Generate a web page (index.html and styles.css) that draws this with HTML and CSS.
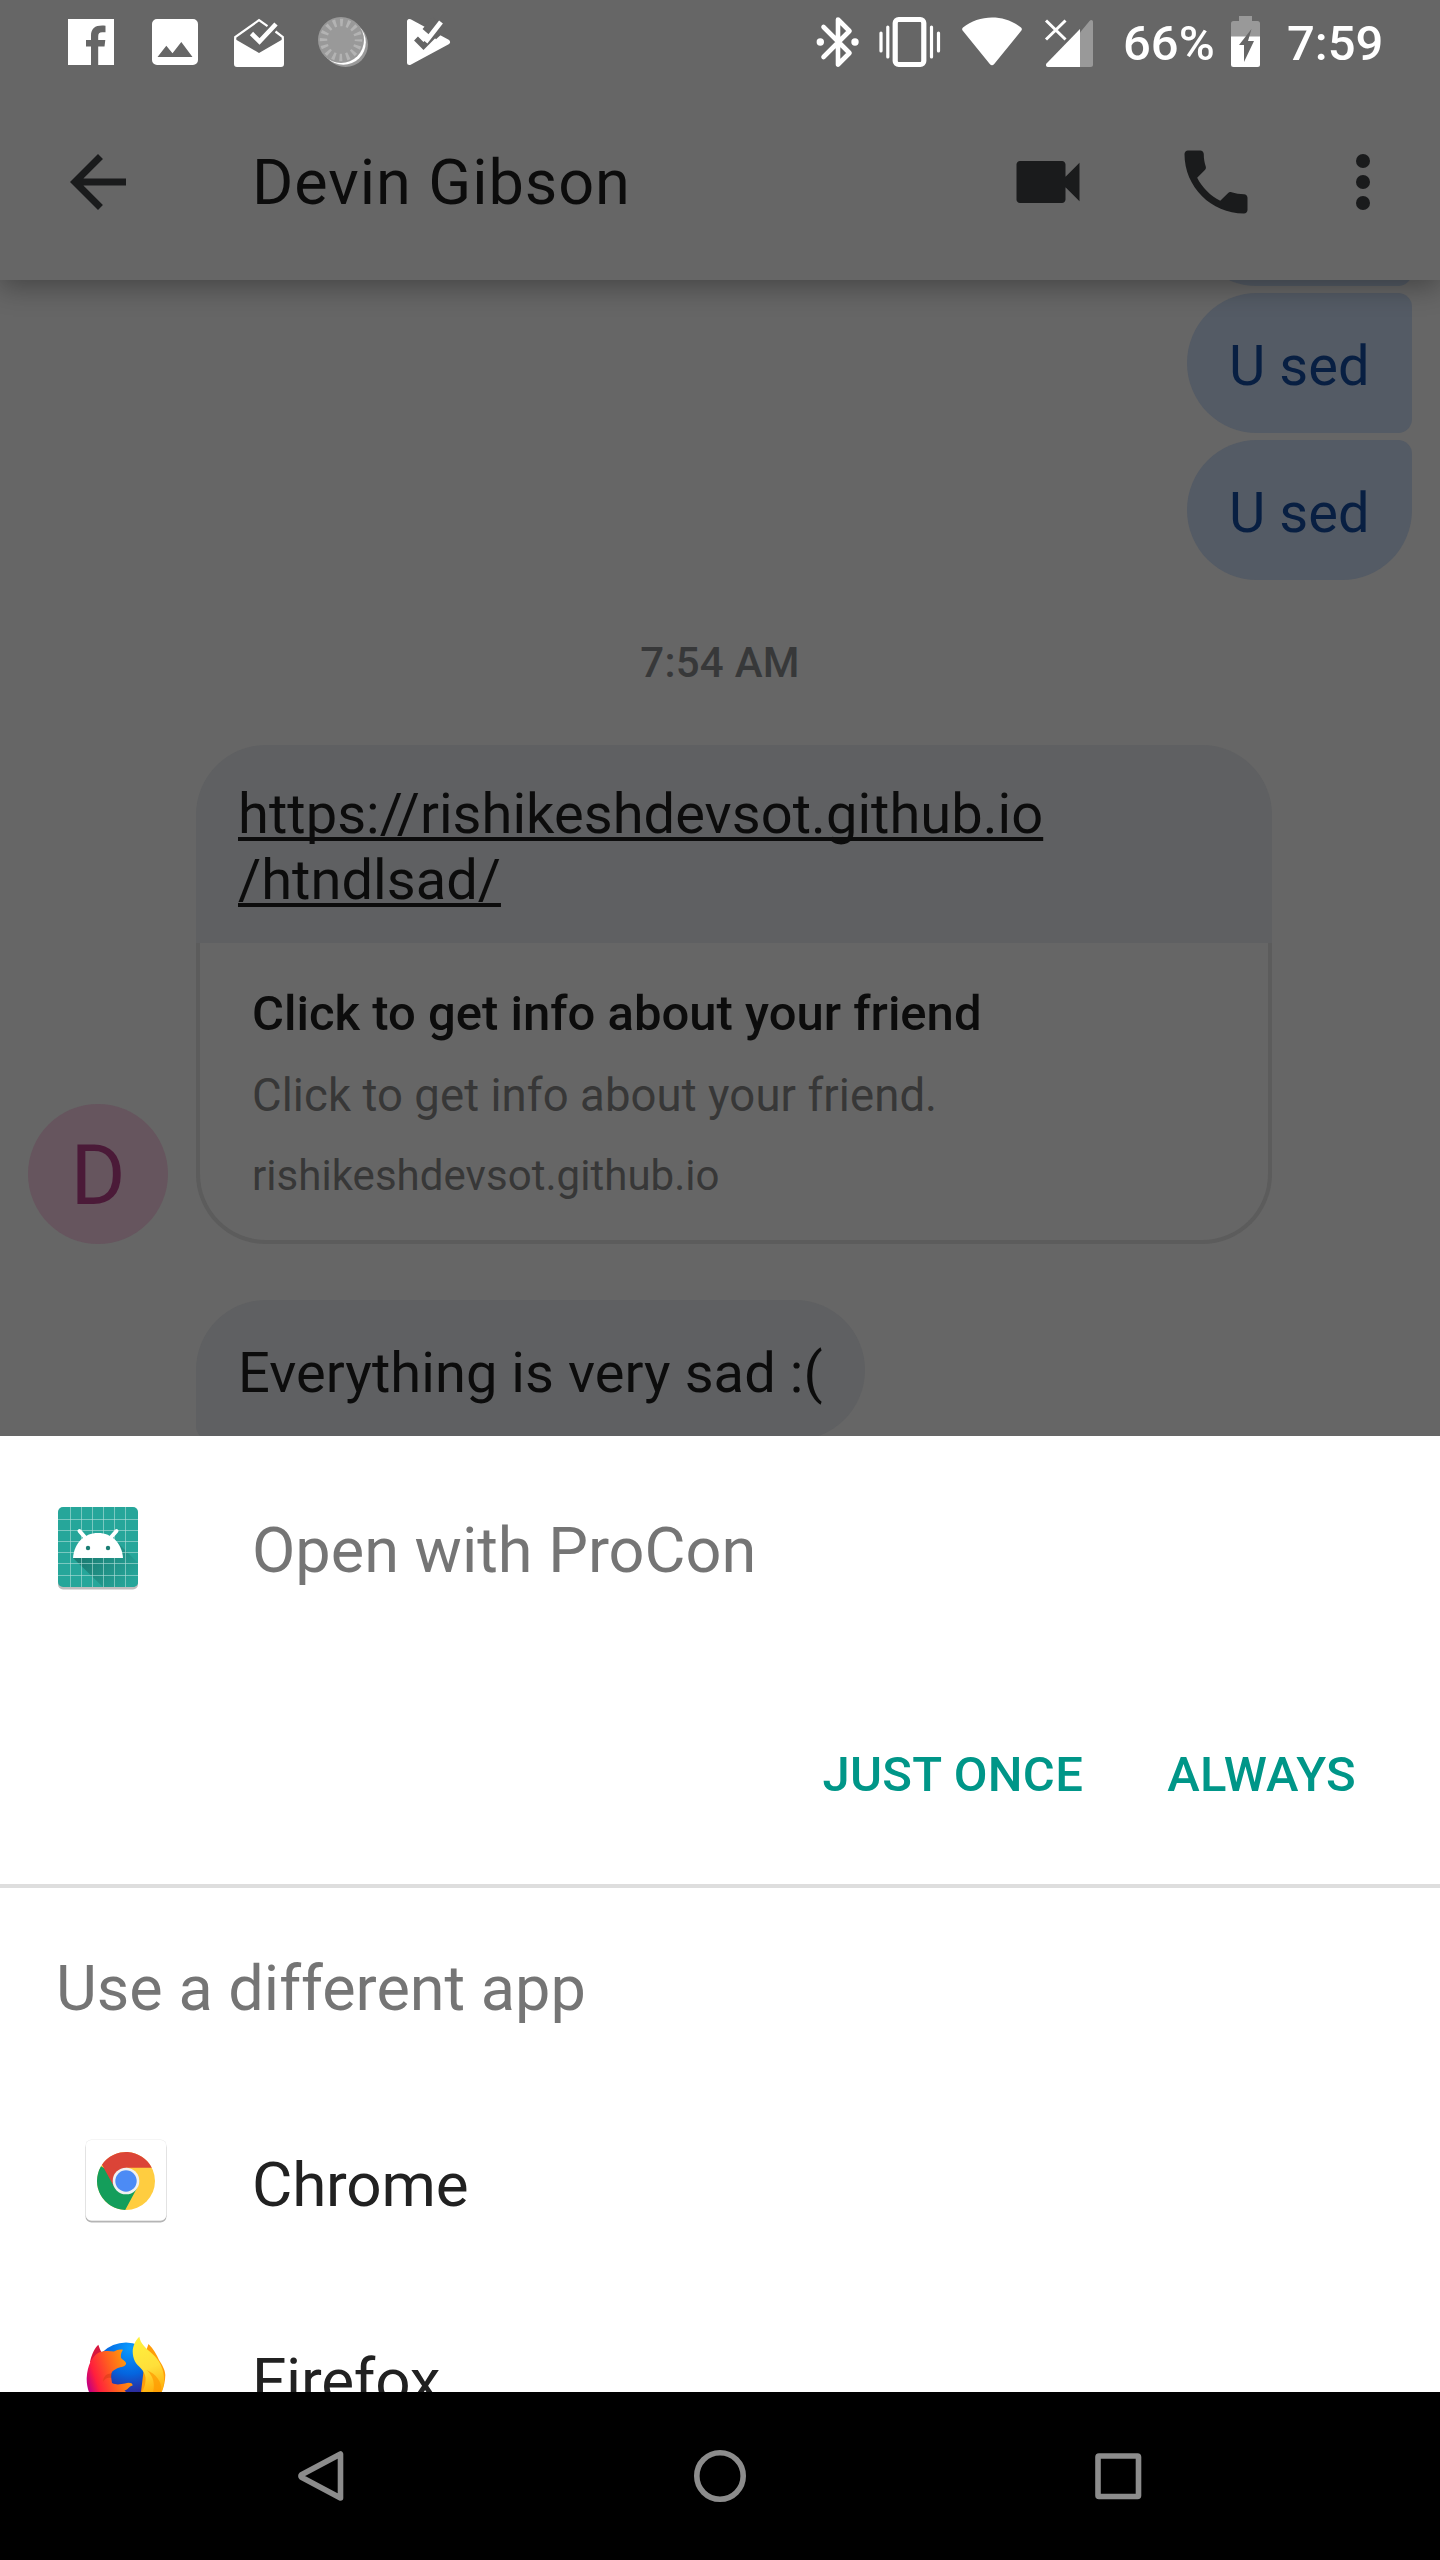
FILE: index.html
```html
<!DOCTYPE html>
<html lang="en">
<head>
<meta charset="utf-8">
<title>Devin Gibson</title>
<link rel="stylesheet" href="styles.css">
</head>
<body>
<div class="phone">
  <header class="top">
    <div class="status">
      <div class="status-left">
        <svg width="84" height="84" viewBox="49 0 84 84"><path fill="#fff" d="M68 19h46v46H98.200V46.500h6.300l.8-6.500h-7.100v-3.500c0-3 1-4.300 4-4.300h3.300v-6.500c-9.500-1-14.500 2-14.500 10V40h-5v6.500h5V65H68z"/></svg>
        <svg width="84" height="84" viewBox="133 0 84 84"><path fill="#fff" fill-rule="evenodd" d="M157 19h36a5 5 0 0 1 5 5v36a5 5 0 0 1-5 5h-36a5 5 0 0 1-5-5V24a5 5 0 0 1 5-5zm0.500 38h35l-11.200-15-8.800 11.200-6.200-7.500z"/></svg>
        <svg width="84" height="84" viewBox="217 0 84 84"><path fill="#fff" d="M234 38.500 259 53l25-14.500V64a3 3 0 0 1-3 3h-44a3 3 0 0 1-3-3z"/><path fill="none" stroke="#fff" stroke-width="2.200" d="M235.200 40v-3L259 20.200l8.500 6M275.500 31.500l7.300 5.500v3"/><path fill="none" stroke="#fff" stroke-width="4.600" d="m251.500 33.500 8 8 16.500-17.500"/></svg>
        <svg width="84" height="84" viewBox="301 0 84 84"><circle cx="345.500" cy="44.500" r="22.500" fill="#999"/><circle cx="343.300" cy="42.300" r="22.500" fill="#fff"/><circle cx="341" cy="40" r="23" fill="#999"/><circle cx="341" cy="40" r="17.500" fill="none" stroke="#b3b3b3" stroke-width="7.500" stroke-dasharray="2.800 4.072" stroke-dashoffset="1.400"/></svg>
        <svg width="84" height="84" viewBox="385 0 84 84"><path fill="#fff" stroke="#fff" stroke-width="5" stroke-linejoin="round" d="M409.500 21.500v41L447.500 42z"/><path fill="none" stroke="#666" stroke-width="9" d="m426 32 10-12M433 36l10-9" /><path fill="none" stroke="#666" stroke-width="5.500" d="m416 38.500 7.500 7.500 15-15"/><path fill="none" stroke="#fff" stroke-width="4.800" d="m421 35 6 5 14-18"/></svg>
      </div>
      <div class="status-right">
        <svg width="60" height="84" viewBox="810 0 60 84"><path fill="none" stroke="#fff" stroke-width="4.600" stroke-linejoin="round" stroke-linecap="round" d="m823.500 27 26 26-11.500 11.500v-45L849.500 31 823.500 57"/><circle cx="820.300" cy="42" r="3.700" fill="#fff"/><circle cx="855" cy="42" r="3.700" fill="#fff"/></svg>
        <svg width="80" height="84" viewBox="870 0 80 84"><rect x="895.200" y="19.500" width="28.600" height="45" rx="3.500" fill="none" stroke="#fff" stroke-width="5.200"/><path stroke="#fff" stroke-width="3.200" stroke-linecap="round" d="M881 33v18M887.800 27v30M931.500 27v30M938.500 33v18"/></svg>
        <svg width="84" height="84" viewBox="950 0 84 84"><path fill="#fff" d="M963 27.500c16-13.500 42-13.500 58 0 1 .8 1.100 2 .4 3L994 64.300c-1.200 1.300-2.800 1.300-4 0L962.600 30.500c-.7-1-.6-2.200.4-3z"/></svg>
        <svg width="70" height="84" viewBox="1034 0 70 84"><path fill="#999" d="M1080 32.500 1089.500 21c1.500-1.600 3.500-1 3.500 1.200V64.500a2.500 2.500 0 0 1-2.500 2.500H1080z"/><path fill="#fff" d="M1080 29v38h-32c-2 0-2.700-2-1.500-3.500z"/><path stroke="#fff" stroke-width="3" d="m1046 20.500 19.500 19M1065.500 20.500l-19.500 19"/></svg>
        <span class="status-text battery-text">66%</span>
        <svg width="48" height="84" viewBox="1222 0 48 84"><path fill="#999" d="M1239 16h13v5h5.500a2.500 2.500 0 0 1 2.500 2.500V37h-29V23.500a2.500 2.500 0 0 1 2.500-2.500h5.500z"/><path fill="#fff" d="M1231 36.500h29v28a2.500 2.500 0 0 1-2.500 2.500h-24a2.500 2.500 0 0 1-2.500-2.500z"/><path fill="#666" d="M1251.500 29 1239 45h5v17l10-21h-6z"/></svg>
        <span class="status-text">7:59</span>
      </div>
    </div>
    <div class="appbar">
      <svg class="ico" viewBox="0 0 24 24"><path d="M20 11H7.830l5.590-5.590L12 4l-8 8 8 8 1.410-1.410L7.830 13H20z"/></svg>
      <h1 class="contact">Devin Gibson</h1>
      <div class="actions">
        <svg class="ico" viewBox="0 0 24 24"><path d="M17 10.500V7c0-.55-.45-1-1-1H4c-.55 0-1 .45-1 1v10c0 .55.45 1 1 1h12c.55 0 1-.45 1-1v-3.500l4 4v-11z"/></svg>
        <svg class="ico" viewBox="0 0 24 24"><path d="M6.620 10.790c1.440 2.830 3.760 5.140 6.590 6.590l2.200-2.200c.27-.27.670-.36 1.020-.24 1.120.37 2.330.57 3.570.57.55 0 1 .45 1 1V20c0 .55-.45 1-1 1-9.390 0-17-7.610-17-17 0-.55.45-1 1-1h3.500c.55 0 1 .45 1 1 0 1.250.2 2.450.57 3.570.11.35.03.74-.25 1.020z"/></svg>
        <svg class="ico more" viewBox="0 0 24 24"><circle cx="12" cy="6" r="2"/><circle cx="12" cy="12" r="2"/><circle cx="12" cy="18" r="2"/></svg>
      </div>
    </div>
  </header>

  <main class="chat">
    <div class="sent">
      <div class="bubble out clipped"></div>
      <div class="bubble out">U sed</div>
      <div class="bubble out last">U sed</div>
    </div>
    <div class="time">7:54 AM</div>
    <div class="received">
      <div class="avatar">D</div>
      <div class="card">
        <div class="card-link"><a>https://rishikeshdevsot.github.io<br>/htndlsad/</a></div>
        <div class="preview">
          <div class="p-title">Click to get info about your friend</div>
          <div class="p-desc">Click to get info about your friend.</div>
          <div class="p-host">rishikeshdevsot.github.io</div>
        </div>
      </div>
    </div>
    <div class="bubble in">Everything is very sad :(</div>
  </main>

  <section class="sheet">
    <div class="open-with">
      <svg class="app-icon" width="84" height="86" viewBox="-2 -2 84 86">
        <defs>
          <linearGradient id="cast" x1="30" y1="45" x2="70" y2="80" gradientUnits="userSpaceOnUse"><stop offset="0" stop-color="#1b7d73"/><stop offset="1" stop-color="#26a69a"/></linearGradient>
        </defs>
        <rect x="0" y="1.500" width="80" height="81" rx="5" fill="#bdbdbd"/>
        <rect width="80" height="80" rx="5" fill="#26a69a"/>
        <path fill="url(#cast)" d="M15 51 45 80h30a5 5 0 0 0 5-5V56L60 36z"/>
        <path stroke="#b2e0db" stroke-opacity=".6" stroke-width="1" d="M12.500 0v80M23.500 0v80M34.500 0v80M45.500 0v80M56.500 0v80M67.500 0v80M0 12.500h80M0 23.500h80M0 34.500h80M0 45.500h80M0 56.500h80M0 68.500h80"/>
        <path fill="#fff" d="M15 51c1-14.500 11-25 25-25s24 10.500 25 25z"/>
        <path stroke="#fff" stroke-width="4" stroke-linecap="round" d="m21.500 24 7 8M58.500 24l-7 8"/>
        <circle cx="30" cy="41" r="2.200" fill="#1b7d73"/><circle cx="50" cy="41" r="2.200" fill="#1b7d73"/>
      </svg>
      <div class="open-title">Open with ProCon</div>
    </div>
    <div class="buttons"><span>JUST ONCE</span><span>ALWAYS</span></div>
    <div class="other-title">Use a different app</div>
    <div class="app-row">
      <svg class="row-icon" width="84" height="88" viewBox="-2 -2 84 88">
        <rect x="-.500" y="1.500" width="81" height="81" rx="6" fill="#b5b5b5"/>
        <rect x="-.500" y="-.500" width="81" height="81" rx="6" fill="#ebebeb"/>
        <rect width="80" height="80.500" rx="5.500" fill="#fff"/>
        <g transform="translate(40 41)">
          <circle r="29" fill="#ffcd40"/>
          <path fill="#149e5b" d="M-25-14.700A29 29 0 0 0-.800 29L11.300 6.500 0 0z"/>
          <path fill="#db4437" d="M-24-16.300A29 29 0 0 1 25.800-13.300H0L-11.500 6.600z"/>
          <circle r="13.300" fill="#f1f1f1"/><circle r="10.700" fill="#4c8bf5"/>
        </g>
      </svg>
      <div>Chrome</div>
    </div>
    <div class="app-row">
      <svg class="row-icon" width="84" height="88" viewBox="-2 -2 84 88">
        <defs>
          <radialGradient id="globe" cx="44" cy="12" r="52" gradientUnits="userSpaceOnUse"><stop offset="0" stop-color="#0a9bff"/><stop offset=".5" stop-color="#0465df"/><stop offset=".85" stop-color="#2c2b9c"/></radialGradient>
          <linearGradient id="fur" x1="0" y1="44" x2="42" y2="30" gradientUnits="userSpaceOnUse"><stop offset="0" stop-color="#c4007f"/><stop offset=".22" stop-color="#ff1f3d"/><stop offset=".6" stop-color="#ff5f1f"/><stop offset="1" stop-color="#ff9a0a"/></linearGradient>
          <linearGradient id="tail" x1="52" y1="2" x2="72" y2="62" gradientUnits="userSpaceOnUse"><stop offset="0" stop-color="#fff13d"/><stop offset=".5" stop-color="#ffdf3a"/><stop offset="1" stop-color="#ffa200"/></linearGradient>
        </defs>
        <circle cx="40" cy="40" r="33.500" fill="url(#globe)"/>
        <path fill="#ff9d0a" d="M60 15 62.500 8c5 5 8 10 10.500 16 3 5 6 9 6.300 15C79 62 62 80 40 80l15-24z"/>
        <path fill="#d7173d" d="M4 26C6 17 9 12 12.300 8.700c1 2.500 1.500 4.500 3 7.300L8 30z"/>
        <path fill="url(#fur)" d="M.700 42C1.500 29 6 20 13 16.500c5-1.800 10-1.700 15-1 3-2 6-2.500 9-1.800-1.700 2.300-2.500 5-2 8 2 3 5.300 3 5 6.300-1 3.500-7 2.500-10 5-3.500 1.500-5.500 4-5 7.500l1 6.500c5 2.500 9 1 13 .500 4-1.500 8-.5 7.500 2-4 1-4 4-8 5 3 4 10 4 18 1 5 0 12-10 16-10C70 65 58 80 40 80 18 80 0 64 .700 42z"/>
        <path fill="#d63a16" opacity=".55" d="M26 37.500c-5-.500-8.500 2.500-9 8 2-3.500 5-4.500 8-3.500z"/>
        <path fill="url(#tail)" d="M53.300.700C47 7 44.500 16 49 25.500c3 5.500 9.500 8 10.500 16 .500 6-1.500 12-5 17.500L61 74c10-6 16-17 17-28 .8-11-4-22-12-28.500C60 12 54.500 8 53.300.700z"/>
        <path fill="#ff9800" opacity=".7" d="M60.500 34c7 6 9 14 6 24h8c3-9-2-19-14-24z"/>
      </svg>
      <div>Firefox</div>
    </div>
  </section>

  <nav class="nav">
    <svg width="84" height="84" viewBox="278 2434 84 84"><path d="M340.500 2454v44L301.500 2477.200q-1.200-1.200 0-2.400z"/></svg>
    <svg width="84" height="84" viewBox="678 2434 84 84"><circle cx="720" cy="2476" r="23.200"/></svg>
    <svg width="84" height="84" viewBox="1078 2434 84 84"><rect x="1098" y="2456" width="40.500" height="40.500" rx="1"/></svg>
  </nav>
</div>
</body>
</html>
```
FILE: styles.css
```css
* { box-sizing: border-box; }
body { margin: 0; background: #666; font-family: Roboto, "Liberation Sans", sans-serif; }
svg { display: block; flex: none; }

.phone { width: 1440px; height: 2560px; display: flex; flex-direction: column; overflow: hidden; }

/* status bar and app bar */
.top { position: relative; z-index: 1; flex: none; height: 280px; background: #666; box-shadow: 0 7px 26px rgba(0, 0, 0, .32); }
.status { height: 84px; display: flex; justify-content: space-between; padding: 0 56px 0 49px; }
.status-left, .status-right { display: flex; }
.status-text { color: #fff; font-size: 49px; font-weight: 500; line-height: 84px; padding-top: 2px; width: 100px; padding-left: 17px; white-space: nowrap; }
.battery-text { width: 118px; padding-left: 19px; }
.status-right { width: 576px; margin-right: -2px; }
.appbar { height: 196px; display: flex; align-items: center; padding: 0 35px 0 56px; }
.ico { width: 84px; height: 84px; fill: #1a1b1c; }
.contact { flex: 1; margin: 1px 0 0; padding-left: 112px; font-size: 63px; line-height: 74px; font-weight: 400; letter-spacing: .95px; color: #0c0c0c; }
.actions { display: flex; gap: 84px; }
.more { margin-left: -21px; }

/* conversation */
.chat { flex: none; height: 1156px; overflow: hidden; display: flex; flex-direction: column; background: #666; }
.sent { flex: none; height: 300px; display: flex; flex-direction: column; justify-content: flex-end; align-items: flex-end; gap: 7px; padding-right: 28px; }
.bubble { flex: none; height: 140px; padding: 40px 42px 0; font-size: 56px; line-height: 66px; letter-spacing: .07px; white-space: nowrap; }
.out { width: 225px; background: #545b65; color: #081f42; border-radius: 70px 14px 14px 70px; }
.out.last { border-radius: 70px 14px 70px 70px; }
.time { flex: none; margin: 58px 0 57px; height: 50px; text-align: center; font-size: 42px; line-height: 50px; font-weight: 500; letter-spacing: .25px; color: #373839; }
.received { flex: none; height: 499px; display: flex; align-items: flex-end; padding-left: 28px; gap: 28px; }
.avatar { width: 140px; height: 140px; padding-top: 2px; border-radius: 50%; background: #66555e; color: #4b1a38; font-size: 84px; line-height: 140px; text-align: center; }
.card { width: 1076px; height: 499px; }
.card-link { height: 198px; padding: 36px 42px 0; background: #5f6062; border-radius: 70px 70px 0 0; font-size: 56px; line-height: 66px; letter-spacing: .05px; color: #0c0c0c; }
.card-link a { text-decoration: underline; text-decoration-thickness: 3.5px; text-underline-offset: 4px; text-decoration-skip-ink: none; }
.preview { height: 301px; padding: 42px 52px 0; border: 4px solid #5c5c5c; border-top: 0; border-radius: 0 0 70px 70px; white-space: nowrap; }
.p-title { font-size: 49px; line-height: 58px; font-weight: 500; color: #0c0c0c; }
.p-desc { margin-top: 26px; font-size: 45.5px; line-height: 54px; letter-spacing: .08px; color: #373737; }
.p-host { margin-top: 28px; font-size: 42px; line-height: 50px; letter-spacing: .04px; color: #373737; }
.in { align-self: flex-start; margin: 56px 0 0 196px; background: #5f6062; color: #0c0c0c; border-radius: 70px 70px 70px 14px; }

/* app chooser */
.sheet { flex: none; height: 956px; overflow: hidden; background: #fff; font-size: 63px; line-height: 74px; color: #212121; }
.open-with { display: flex; height: 280px; padding: 69px 0 0 54px; }
.open-title { padding: 9px 0 0 114px; color: #757575; }
.app-icon { margin-left: 2px; }
.open-title { padding-left: 112px; }
.buttons { height: 172px; display: flex; justify-content: flex-end; gap: 84px; padding: 30px 84px 0 0; border-bottom: 4px solid #dedede; font-size: 49px; line-height: 58px; font-weight: 500; letter-spacing: .3px; color: #009688; }
.other-title { height: 196px; padding: 64px 56px 0; color: #757575; }
.app-row { height: 196px; padding: 54px 0 0 84px; display: flex; }
.app-row div { padding: 10px 0 0 84px; font-size: 62px; letter-spacing: -.2px; }

/* navigation bar */
.nav { flex: none; height: 168px; background: #000; display: flex; align-items: center; justify-content: space-between; padding: 0 278px; }
.nav svg { fill: none; stroke: #8c8c8c; stroke-width: 5.6; stroke-linejoin: round; }
```
